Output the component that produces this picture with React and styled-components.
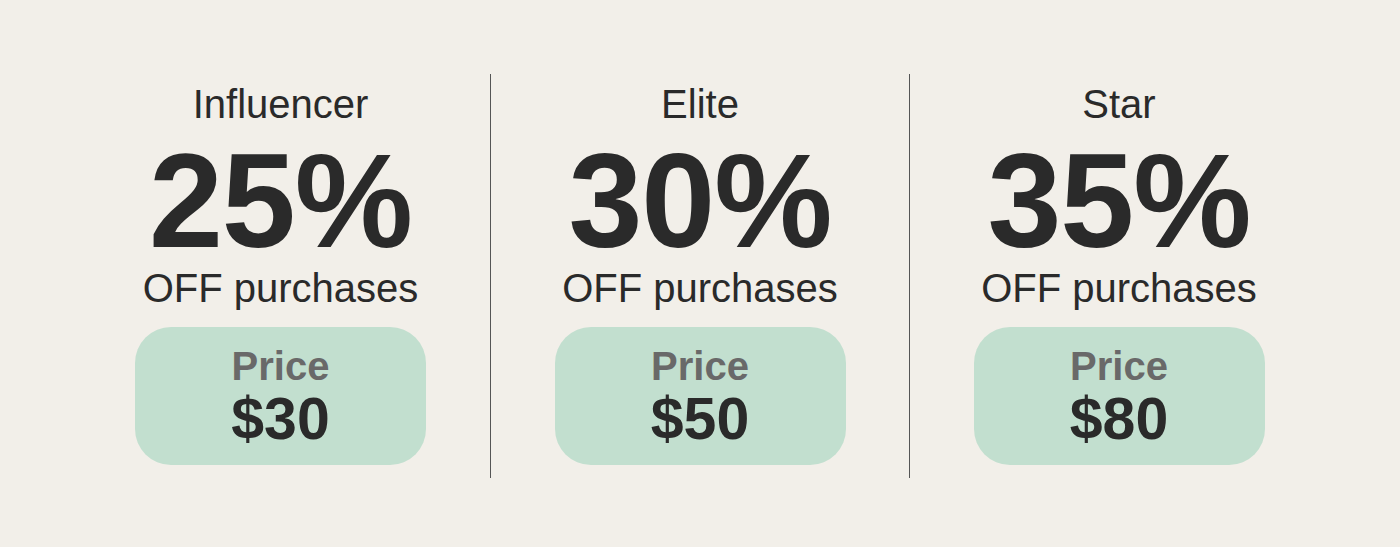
import React from 'react'
import styled, { createGlobalStyle } from 'styled-components'

const tiers = [
  { name: 'Influencer', off: '25%', price: '$30' },
  { name: 'Elite', off: '30%', price: '$50' },
  { name: 'Star', off: '35%', price: '$80' },
]

const GlobalStyle = createGlobalStyle`
  html, body {
    margin: 0;
    padding: 0;
    background: #f2efe9;
  }
  body {
    font-family: "Liberation Sans", Arial, sans-serif;
    color: #2a2a2a;
  }
`

const Page = styled.div`
  width: 1400px;
  height: 547px;
  background: #f2efe9;
  display: flex;
  justify-content: center;
  padding-top: 74px;
  box-sizing: border-box;
`

const Row = styled.div`
  display: flex;
  width: 1258px;
  height: 404px;
`

const Column = styled.div`
  width: 419px;
  flex: none;
  box-sizing: border-box;
  display: flex;
  flex-direction: column;
  align-items: center;
  padding-top: 6px;
  border-left: ${p => (p.$divider ? '1px solid #555' : 'none')};
`

const Title = styled.div`
  font-size: 40px;
  line-height: 48px;
  font-weight: 400;
`

const Off = styled.div`
  font-size: 133px;
  line-height: 116px;
  font-weight: 700;
  letter-spacing: -1px;
  margin-top: 15px;
`

const Sub = styled.div`
  font-size: 40px;
  line-height: 40px;
  margin-top: 9px;
`

const Pill = styled.div`
  margin-top: 19px;
  width: 291px;
  height: 138px;
  border-radius: 36px;
  background: #c2dfcf;
  display: flex;
  flex-direction: column;
  align-items: center;
  padding-top: 17px;
  box-sizing: border-box;
`

const PriceLabel = styled.div`
  font-size: 40px;
  line-height: 44px;
  font-weight: 700;
  color: #696969;
`

const PriceValue = styled.div`
  font-size: 59px;
  line-height: 60px;
  font-weight: 700;
  color: #2a2a2a;
  margin-top: 1px;
`

const App = () => {
  return (
    <Page>
      <GlobalStyle />
      <Row>
        {tiers.map((t, i) => (
          <Column key={t.name} $divider={i > 0}>
            <Title>{t.name}</Title>
            <Off>{t.off}</Off>
            <Sub>OFF purchases</Sub>
            <Pill>
              <PriceLabel>Price</PriceLabel>
              <PriceValue>{t.price}</PriceValue>
            </Pill>
          </Column>
        ))}
      </Row>
    </Page>
  )
}

export default App
